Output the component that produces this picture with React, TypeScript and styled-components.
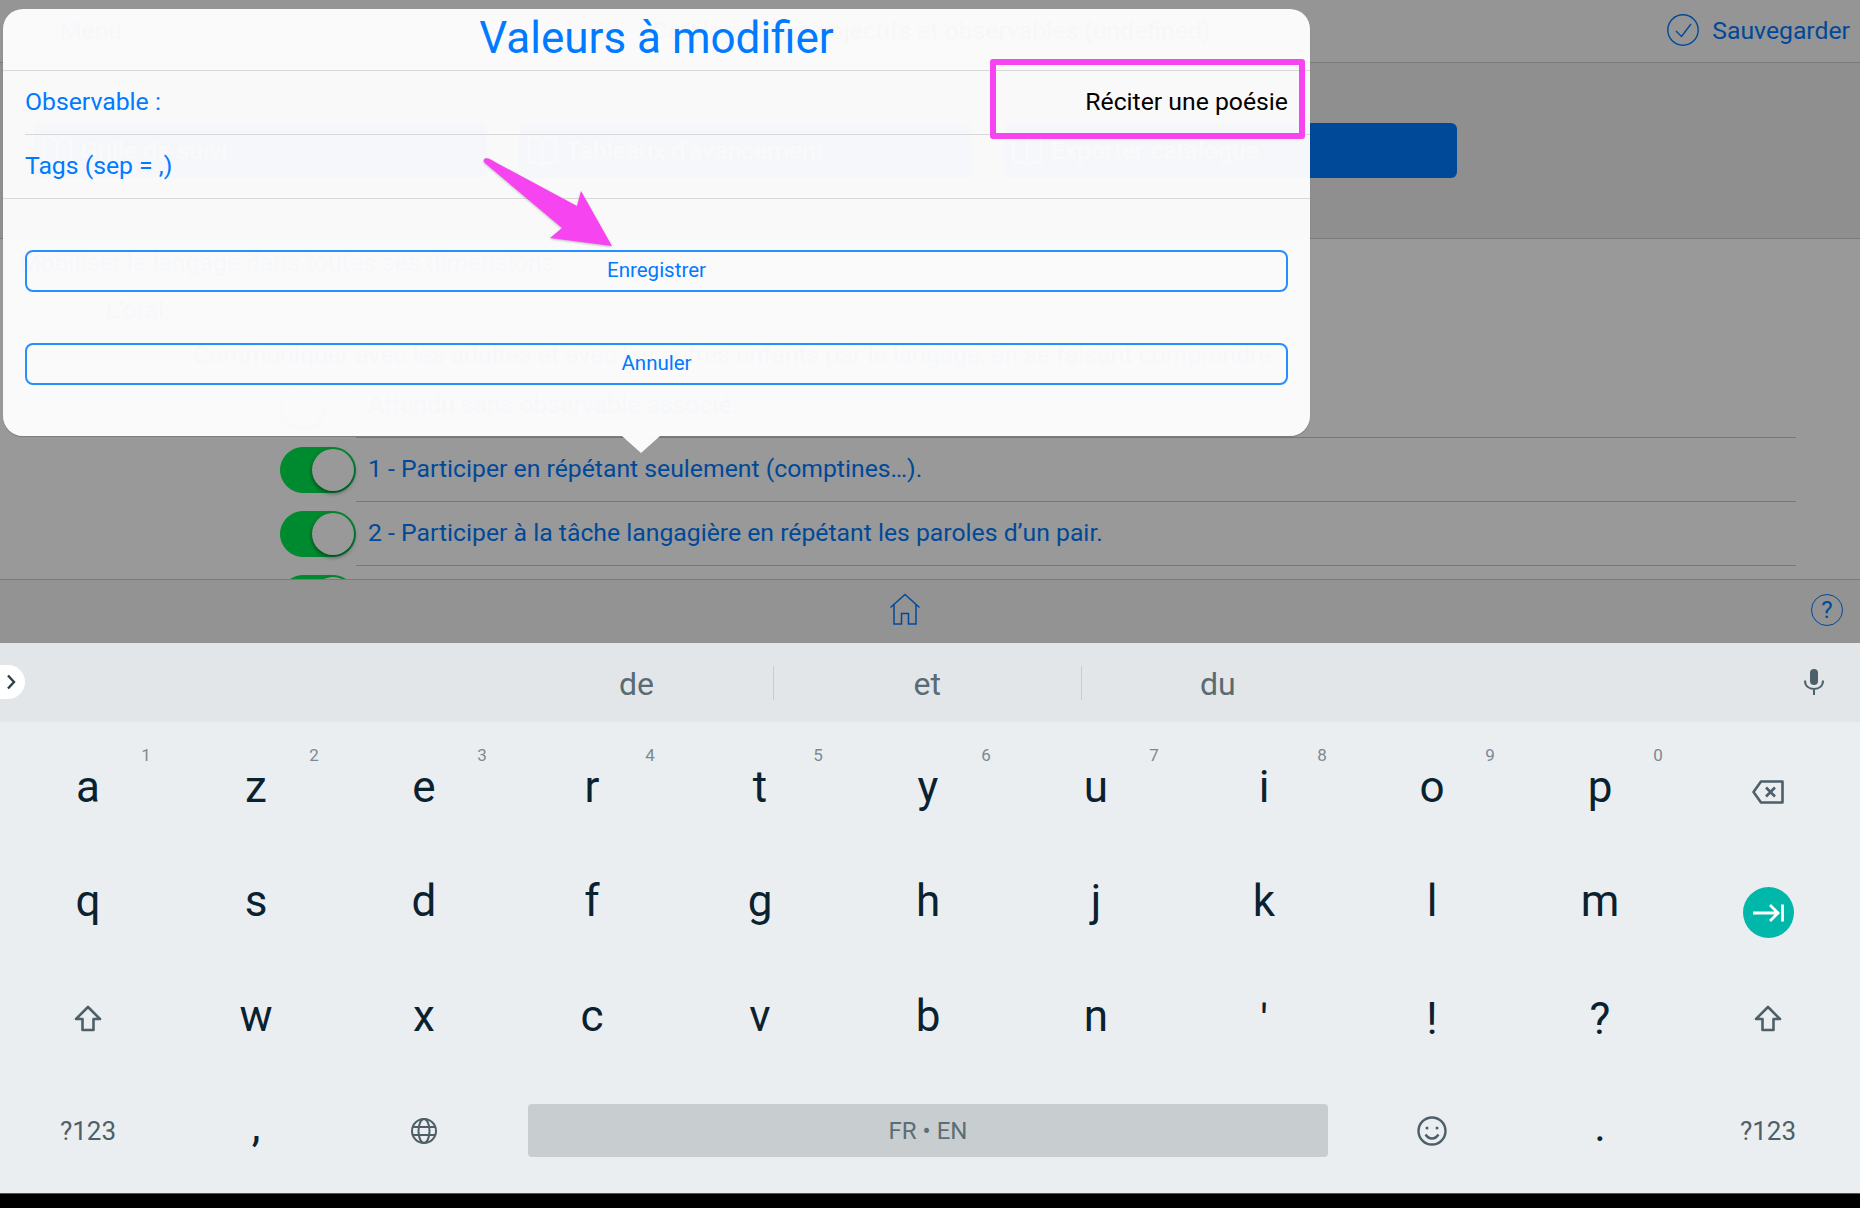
import React from "react";
import styled, { createGlobalStyle } from "styled-components";

const GlobalStyle = createGlobalStyle`
  html, body {
    margin: 0;
    padding: 0;
    background: #000;
    font-family: Roboto, "Liberation Sans", sans-serif;
  }
  * {
    box-sizing: border-box;
  }
`;

const BLUE = "#007aff";
const PINK = "#f544f0";
const KEY_INK = "#0a2230";
const KEY_GREY = "#4d5f69";
const BODY_SIZE = "24.75px";
const SHEET = "rgba(252, 252, 252, 0.975)";

const Root = styled.div`
  width: 1860px;
  height: 1208px;
  display: flex;
  flex-direction: column;
  overflow: hidden;
  background: #000;
`;

const Screen = styled.div`
  position: relative;
  height: 643px;
  display: flex;
  flex-direction: column;
  overflow: hidden;
  background: #fff;
`;

const Header = styled.header`
  height: 63px;
  flex: none;
  display: grid;
  grid-template-columns: 1fr auto 1fr;
  align-items: center;
  padding: 0 10px 2px 8px;
  background: #f8f8f8;
  border-bottom: 1px solid #ccc;
  font-size: ${BODY_SIZE};
  color: ${BLUE};
`;

const MenuButton = styled.div`
  display: flex;
  align-items: center;
  gap: 26px;
`;

const HeaderTitle = styled.div`
  padding-left: 4px;
  color: #555;
`;

const SaveButton = styled.div`
  display: flex;
  align-items: center;
  justify-content: flex-end;
  gap: 13px;
`;

const Toolbar = styled.div`
  height: 176px;
  flex: none;
  display: flex;
  gap: 32px;
  padding: 60px 0 0 34px;
  background: #eeeeef;
  border-bottom: 1px solid #ccc;
`;

const ToolButton = styled.div`
  width: 453px;
  height: 55px;
  display: flex;
  align-items: center;
  gap: 9px;
  padding-left: 8px;
  border-radius: 6px;
  background: ${BLUE};
  color: #fff;
  font-size: ${BODY_SIZE};
`;

const Content = styled.main`
  flex: 1;
  min-height: 0;
  overflow: hidden;
  padding: 1px 64px 0 0;
  color: ${BLUE};
  font-size: ${BODY_SIZE};
`;

const Level = styled.div<{ $indent: number; $height: number; $line: number }>`
  height: ${(p) => p.$height}px;
  line-height: ${(p) => p.$line}px;
  padding-left: ${(p) => p.$indent}px;
  white-space: nowrap;
`;

const Row = styled.div`
  height: 64px;
  display: flex;
  align-items: center;
  padding-left: 280px;
`;

const Toggle = styled.div<{ $on: boolean }>`
  width: 76px;
  height: 46px;
  flex: none;
  display: flex;
  justify-content: ${(p) => (p.$on ? "flex-end" : "flex-start")};
  align-items: center;
  padding: 1px;
  border-radius: 23px;
  border: 1px solid ${(p) => (p.$on ? "#00e650" : "#e6e6e6")};
  background: ${(p) => (p.$on ? "#00e650" : "#fff")};
`;

const Knob = styled.div`
  width: 42px;
  height: 42px;
  border-radius: 50%;
  background: #fff;
  box-shadow: 0 2px 4px rgba(0, 0, 0, 0.5);
`;

const RowLabel = styled.div`
  flex: 1;
  height: 100%;
  display: flex;
  align-items: center;
  padding: 0 0 2px 12px;
  border-bottom: 1px solid #c8c8c8;
`;

const Footer = styled.footer`
  height: 64px;
  flex: none;
  display: grid;
  grid-template-columns: 889px auto 1fr;
  align-items: center;
  padding: 0 17px 6px 0;
  background: #f5f5f6;
  border-top: 1px solid #ccc;
`;

const FooterSlot = styled.div`
  display: flex;
  justify-content: flex-end;
  padding-top: 3px;
  color: ${BLUE};
`;

const HelpMark = styled.div`
  width: 32px;
  height: 32px;
  display: flex;
  align-items: center;
  justify-content: center;
  border: 1.5px solid ${BLUE};
  border-radius: 50%;
  font-size: 24px;
  line-height: 1;
`;

const Backdrop = styled.div`
  position: absolute;
  inset: 0;
  background: rgba(0, 0, 0, 0.4);
`;

const Popover = styled.section`
  position: absolute;
  top: 9px;
  left: 3px;
  width: 1307px;
  height: 427px;
  display: flex;
  flex-direction: column;
  border-radius: 20px;
  background: ${SHEET};
  box-shadow: 0 1px 1px rgba(0, 0, 0, 0.2);
  color: ${BLUE};
`;

const PopoverTip = styled.div`
  position: absolute;
  left: 619px;
  bottom: -17px;
  width: 38px;
  height: 17px;
  background: ${SHEET};
  clip-path: polygon(0 0, 100% 0, 50% 100%);
`;

const PopoverTitle = styled.h1`
  margin: 0;
  height: 62px;
  flex: none;
  display: flex;
  align-items: center;
  justify-content: center;
  padding-bottom: 4px;
  border-bottom: 1px solid #d8d8d8;
  font-size: 44px;
  font-weight: 400;
`;

const FieldList = styled.div`
  padding-left: 22px;
  border-bottom: 1px solid #d8d8d8;
  margin-bottom: 51px;
`;

const Field = styled.div<{ $last?: boolean }>`
  height: ${(p) => (p.$last ? 63 : 64)}px;
  display: flex;
  align-items: center;
  justify-content: space-between;
  padding-right: 22px;
  padding-bottom: 2px;
  border-bottom: ${(p) => (p.$last ? "none" : "1px solid #d8d8d8")};
  font-size: ${BODY_SIZE};
`;

const FieldValue = styled.span`
  color: #000;
`;

const ActionList = styled.div`
  display: flex;
  flex-direction: column;
  gap: 51px;
  padding: 0 22px;
`;

const ActionButton = styled.div`
  height: 42px;
  display: flex;
  align-items: center;
  justify-content: center;
  padding-bottom: 3px;
  border: 2px solid rgba(0, 122, 255, 0.85);
  border-radius: 8px;
  font-size: 20.500px;
`;

const HighlightBox = styled.div`
  position: absolute;
  left: 990px;
  top: 59px;
  width: 315px;
  height: 80px;
  border: 6px solid ${PINK};
  border-radius: 3px;
`;

const PointerArrow = styled.svg`
  position: absolute;
  left: 470px;
  top: 150px;
  width: 160px;
  height: 110px;
  filter: drop-shadow(0 1px 1px rgba(0, 0, 0, 0.25));
`;

const Keyboard = styled.div`
  height: 551px;
  flex: none;
  display: flex;
  flex-direction: column;
  background: #eaeef1;
  border-bottom: 1px solid #555;
`;

const Suggestions = styled.div`
  position: relative;
  height: 79px;
  flex: none;
  display: grid;
  grid-template-columns: 774px 308px 1fr;
  align-items: center;
  background: #e2e6e9;
  color: #5a6b73;
  font-size: 32px;
`;

const Suggestion = styled.div<{ $inset: number; $divider?: boolean }>`
  height: 34px;
  display: flex;
  align-items: center;
  justify-content: ${(p) => (p.$divider ? "flex-end" : "flex-start")};
  padding: ${(p) => (p.$divider ? `2px ${p.$inset}px 0 0` : `2px 0 0 ${p.$inset}px`)};
  border-right: ${(p) => (p.$divider ? "1px solid #c6ccd0" : "none")};
`;

const Expander = styled.div`
  position: absolute;
  left: 0;
  top: 22px;
  width: 25px;
  height: 34px;
  display: flex;
  align-items: center;
  justify-content: flex-start;
  padding-left: 6px;
  border-radius: 0 17px 17px 0;
  background: #fff;
`;

const MicIcon = styled.svg`
  position: absolute;
  left: 1802px;
  top: 25px;
  width: 24px;
  height: 28px;
`;

const KeyGrid = styled.div`
  display: grid;
  grid-template-columns: repeat(11, 168px);
  grid-auto-rows: 115px;
  padding: 6px 4px 0;
`;

const Key = styled.div<{ $grey?: boolean; $nudge?: number }>`
  position: relative;
  display: flex;
  align-items: center;
  justify-content: center;
  padding-top: ${(p) => (p.$nudge && p.$nudge > 0 ? p.$nudge * 2 : 0)}px;
  padding-bottom: ${(p) => (p.$nudge && p.$nudge < 0 ? -p.$nudge * 2 : 0)}px;
  color: ${(p) => (p.$grey ? KEY_GREY : KEY_INK)};
  font-size: ${(p) => (p.$grey ? 26 : 44)}px;
  line-height: 1;
`;

const Hint = styled.span`
  position: absolute;
  left: 136px;
  top: 19px;
  width: 12px;
  text-align: center;
  font-size: 17px;
  color: #7b8a92;
`;

const SpaceKey = styled.div`
  grid-column: span 5;
  display: flex;
  align-items: center;
  justify-content: center;
`;

const SpaceBar = styled.div`
  width: 800px;
  height: 53px;
  display: flex;
  align-items: center;
  justify-content: center;
  border-radius: 4px;
  background: #c8cdd0;
  color: #5d6d75;
  font-size: 24px;
`;

const GoButton = styled.div`
  width: 51px;
  height: 51px;
  margin-top: 24px;
  display: flex;
  align-items: center;
  justify-content: center;
  border-radius: 50%;
  background: #00b8a9;
`;

const BackspaceIcon = styled.svg`
  width: 32px;
  height: 24px;
  margin-top: 12px;
`;

const ShiftIcon = styled.svg`
  width: 28px;
  height: 27px;
  margin-top: 5px;
`;

const GlobeIcon = styled.svg`
  width: 26px;
  height: 26px;
`;

const SmileIcon = styled.svg`
  width: 30px;
  height: 30px;
`;

const BookIcon = () => (
  <svg width="30" height="32" viewBox="0 0 30 32" fill="none" stroke="#fff" strokeWidth="1.4">
    <path d="M15 6C12 2.500 6 2 1.500 3v25c4.500-1 10.500-.5 13.500 2.500 3-3 9-3.500 13.500-2.500V3C24 2 18 2.500 15 6z" />
    <path d="M15 6v24" />
  </svg>
);

const ShiftGlyph = () => (
  <ShiftIcon viewBox="0 0 28 27" fill="none" stroke={KEY_GREY} strokeWidth="2.6" strokeLinejoin="round">
    <path d="M14 2 26 14h-6.500v11h-11V14H2z" />
  </ShiftIcon>
);

const topRow: [string, string][] = [
  ["a", "1"],
  ["z", "2"],
  ["e", "3"],
  ["r", "4"],
  ["t", "5"],
  ["y", "6"],
  ["u", "7"],
  ["i", "8"],
  ["o", "9"],
  ["p", "0"],
];
const homeRow = ["q", "s", "d", "f", "g", "h", "j", "k", "l", "m"];
const lowerRow: [string, number][] = [
  ["w", 0],
  ["x", 0],
  ["c", 0],
  ["v", 0],
  ["b", 0],
  ["n", 0],
  ["'", 5],
  ["!", 3],
  ["?", 3],
];

const App = () => (
  <Root>
    <GlobalStyle />
    <Screen>
      <Header>
        <MenuButton>
          <svg width="26" height="16" viewBox="0 0 26 16" stroke={BLUE} strokeWidth="1.2">
            <path d="M0 1h26M0 8h26M0 15h26" />
          </svg>
          Menu
        </MenuButton>
        <HeaderTitle>Catalogue des objectifs et observables (undefined)</HeaderTitle>
        <SaveButton>
          <svg width="32" height="32" viewBox="0 0 32 32" fill="none" stroke={BLUE} strokeWidth="1.4">
            <circle cx="16" cy="16" r="15.200" />
            <path d="M9 17l5.500 5.500L24 10" />
          </svg>
          Sauvegarder
        </SaveButton>
      </Header>
      <Toolbar>
        <ToolButton>
          <BookIcon />
          Grille de suivi
        </ToolButton>
        <ToolButton>
          <BookIcon />
          Tableaux d'avancement
        </ToolButton>
        <ToolButton>
          <BookIcon />
          Exporter catalogue
        </ToolButton>
      </Toolbar>
      <Content>
        <Level $indent={19} $height={46} $line={46}>
          Mobiliser le langage dans toutes ses dimensions.
        </Level>
        <Level $indent={106} $height={47} $line={47}>
          L’oral.
        </Level>
        <Level $indent={193} $height={41} $line={44}>
          Communiquer avec les adultes et avec les autres enfants par le langage, en se faisant comprendre.
        </Level>
        <Row>
          <Toggle $on={false}>
            <Knob />
          </Toggle>
          <RowLabel>Attendu sans observable associé.</RowLabel>
        </Row>
        <Row>
          <Toggle $on>
            <Knob />
          </Toggle>
          <RowLabel>1 - Participer en répétant seulement (comptines…).</RowLabel>
        </Row>
        <Row>
          <Toggle $on>
            <Knob />
          </Toggle>
          <RowLabel>2 - Participer à la tâche langagière en répétant les paroles d’un pair.</RowLabel>
        </Row>
        <Row>
          <Toggle $on>
            <Knob />
          </Toggle>
          <RowLabel />
        </Row>
      </Content>
      <Footer>
        <span />
        <svg width="32" height="32" viewBox="0 0 32 32" fill="none" stroke={BLUE} strokeWidth="1.500">
          <path d="M1.500 14.500 16 1.500l14.500 13" />
          <path d="M5 11.500V31h7.500V20.500h7V31H27V11.500" />
        </svg>
        <FooterSlot>
          <HelpMark>?</HelpMark>
        </FooterSlot>
      </Footer>
      <Backdrop />
      <Popover>
        <PopoverTitle>Valeurs à modifier</PopoverTitle>
        <FieldList>
          <Field>
            Observable :<FieldValue>Réciter une poésie</FieldValue>
          </Field>
          <Field $last>Tags (sep = ,)</Field>
        </FieldList>
        <ActionList>
          <ActionButton>Enregistrer</ActionButton>
          <ActionButton>Annuler</ActionButton>
        </ActionList>
        <PopoverTip />
      </Popover>
      <PointerArrow viewBox="0 0 160 110">
        <path
          d="M15 8.500C18 7.500 22 10 25 12L107 56 111 41 142 96 80 88 92 78 16 14C13 12 13 9.500 15 8.500z"
          fill={PINK}
        />
      </PointerArrow>
      <HighlightBox />
    </Screen>
    <Keyboard>
      <Suggestions>
        <Expander>
          <svg width="10" height="16" viewBox="0 0 10 16" fill="none" stroke="#2d3f49" strokeWidth="2.400">
            <path d="M2 1.500 8 8l-6 6.500" />
          </svg>
        </Expander>
        <Suggestion $inset={119} $divider>
          de
        </Suggestion>
        <Suggestion $inset={140} $divider>
          et
        </Suggestion>
        <Suggestion $inset={118}>du</Suggestion>
        <MicIcon viewBox="0 0 24 28" fill="none" stroke={KEY_GREY} strokeWidth="2">
          <rect x="8" y="1" width="8" height="16" rx="4" fill={KEY_GREY} stroke="none" />
          <path d="M3 12.500c0 5.500 4 8.500 9 8.500s9-3 9-8.500M12 21v6" />
        </MicIcon>
      </Suggestions>
      <KeyGrid>
        {topRow.map(([letter, digit]) => (
          <Key key={letter} $nudge={1}>
            {letter}
            <Hint>{digit}</Hint>
          </Key>
        ))}
        <Key $grey>
          <BackspaceIcon viewBox="0 0 32 24" fill="none" stroke={KEY_GREY} strokeWidth="2.600" strokeLinejoin="round">
            <path d="M9 1.500h21.500v21H9L1.500 12z" />
            <path d="M14 7.500l9 9M23 7.500l-9 9" />
          </BackspaceIcon>
        </Key>
        {homeRow.map((letter) => (
          <Key key={letter}>{letter}</Key>
        ))}
        <Key>
          <GoButton>
            <svg width="32" height="20" viewBox="0 0 32 20" fill="none" stroke="#fff" strokeWidth="2.800">
              <path d="M1 10h26M18 2l8 8-8 8M30.500 1.500v17" />
            </svg>
          </GoButton>
        </Key>
        <Key $grey>
          <ShiftGlyph />
        </Key>
        {lowerRow.map(([letter, nudge]) => (
          <Key key={letter} $nudge={nudge}>
            {letter}
          </Key>
        ))}
        <Key $grey>
          <ShiftGlyph />
        </Key>
        <Key $grey>?123</Key>
        <Key $nudge={-5}>,</Key>
        <Key $grey>
          <GlobeIcon viewBox="0 0 26 26" fill="none" stroke={KEY_GREY} strokeWidth="2">
            <circle cx="13" cy="13" r="12" />
            <ellipse cx="13" cy="13" rx="5.500" ry="12" />
            <path d="M2 9h22M2 17h22" />
          </GlobeIcon>
        </Key>
        <SpaceKey>
          <SpaceBar>FR • EN</SpaceBar>
        </SpaceKey>
        <Key $grey>
          <SmileIcon viewBox="0 0 30 30" fill="none" stroke={KEY_GREY} strokeWidth="2.400">
            <circle cx="15" cy="15" r="13.500" />
            <path d="M8.500 18.500c2 3 4 4 6.500 4s4.500-1 6.500-4" />
            <circle cx="10" cy="12" r="1.500" fill={KEY_GREY} stroke="none" />
            <circle cx="20" cy="12" r="1.500" fill={KEY_GREY} stroke="none" />
          </SmileIcon>
        </Key>
        <Key $nudge={-5}>.</Key>
        <Key $grey>?123</Key>
      </KeyGrid>
    </Keyboard>
  </Root>
);

export default App;
